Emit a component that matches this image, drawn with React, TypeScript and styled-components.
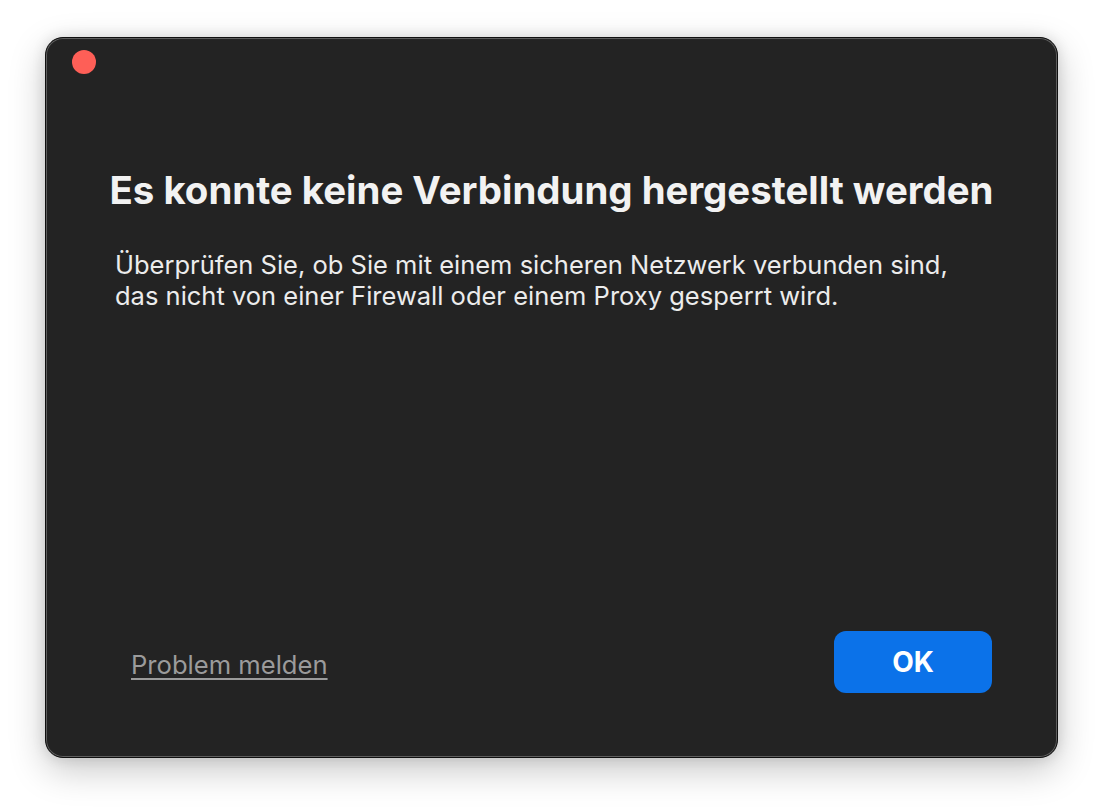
import styled, { createGlobalStyle } from "styled-components";

const GlobalStyle = createGlobalStyle`
  html, body {
    margin: 0;
    padding: 0;
    background: #ffffff;
  }
  body {
    font-family: Inter, "Noto Sans", "Liberation Sans", sans-serif;
    -webkit-font-smoothing: antialiased;
  }
`;

const Page = styled.div`
  width: 1104px;
  height: 812px;
  box-sizing: border-box;
  padding: 37px 0 0 45px;
`;

const Window = styled.div`
  width: 1013px;
  height: 721px;
  box-sizing: border-box;
  background: #232323;
  border: 1px solid #101010;
  border-radius: 18px;
  box-shadow: inset 0 0 0 1px #5e5e5e, 0 12px 36px rgba(0, 0, 0, 0.22),
    0 0 14px rgba(0, 0, 0, 0.12);
  display: flex;
  flex-direction: column;
`;

const TitleBar = styled.div`
  height: 48px;
  padding: 12px 0 0 26px;
  box-sizing: border-box;
`;

const CloseDot = styled.span`
  display: block;
  width: 24px;
  height: 24px;
  border-radius: 50%;
  background: #fe5f57;
`;

const Content = styled.div`
  padding-top: 82px;
`;

const Title = styled.h1`
  margin: 0;
  text-align: center;
  font-size: 38.4px;
  line-height: 44px;
  font-weight: 700;
  color: #f2f2f2;
`;

const Message = styled.p`
  margin: 37px 0 0;
  padding-left: 69px;
  font-size: 25.5px;
  line-height: 31px;
  font-weight: 400;
  color: #ececec;
  white-space: nowrap;
`;

const Footer = styled.div`
  margin-top: auto;
  display: flex;
  align-items: center;
  justify-content: space-between;
  padding: 0 65px 64px 85px;
`;

const ReportLink = styled.a`
  font-size: 25.6px;
  line-height: 31px;
  color: #9b9b9b;
  text-decoration: underline;
  text-underline-offset: 4px;
  text-decoration-thickness: 2px;
  cursor: pointer;
  transform: translateY(2px);
`;

const OkButton = styled.button`
  width: 158px;
  height: 62px;
  border: none;
  border-radius: 12px;
  background: #0b72e9;
  color: #ffffff;
  font-family: inherit;
  font-size: 28px;
  font-weight: 700;
  cursor: pointer;
`;

function App() {
  return (
    <>
      <GlobalStyle />
      <Page>
        <Window>
          <TitleBar>
            <CloseDot />
          </TitleBar>
          <Content>
            <Title>Es konnte keine Verbindung hergestellt werden</Title>
            <Message>
              Überprüfen Sie, ob Sie mit einem sicheren Netzwerk verbunden sind,
              <br />
              das nicht von einer Firewall oder einem Proxy gesperrt wird.
            </Message>
          </Content>
          <Footer>
            <ReportLink>Problem melden</ReportLink>
            <OkButton>OK</OkButton>
          </Footer>
        </Window>
      </Page>
    </>
  );
}

export default App;
